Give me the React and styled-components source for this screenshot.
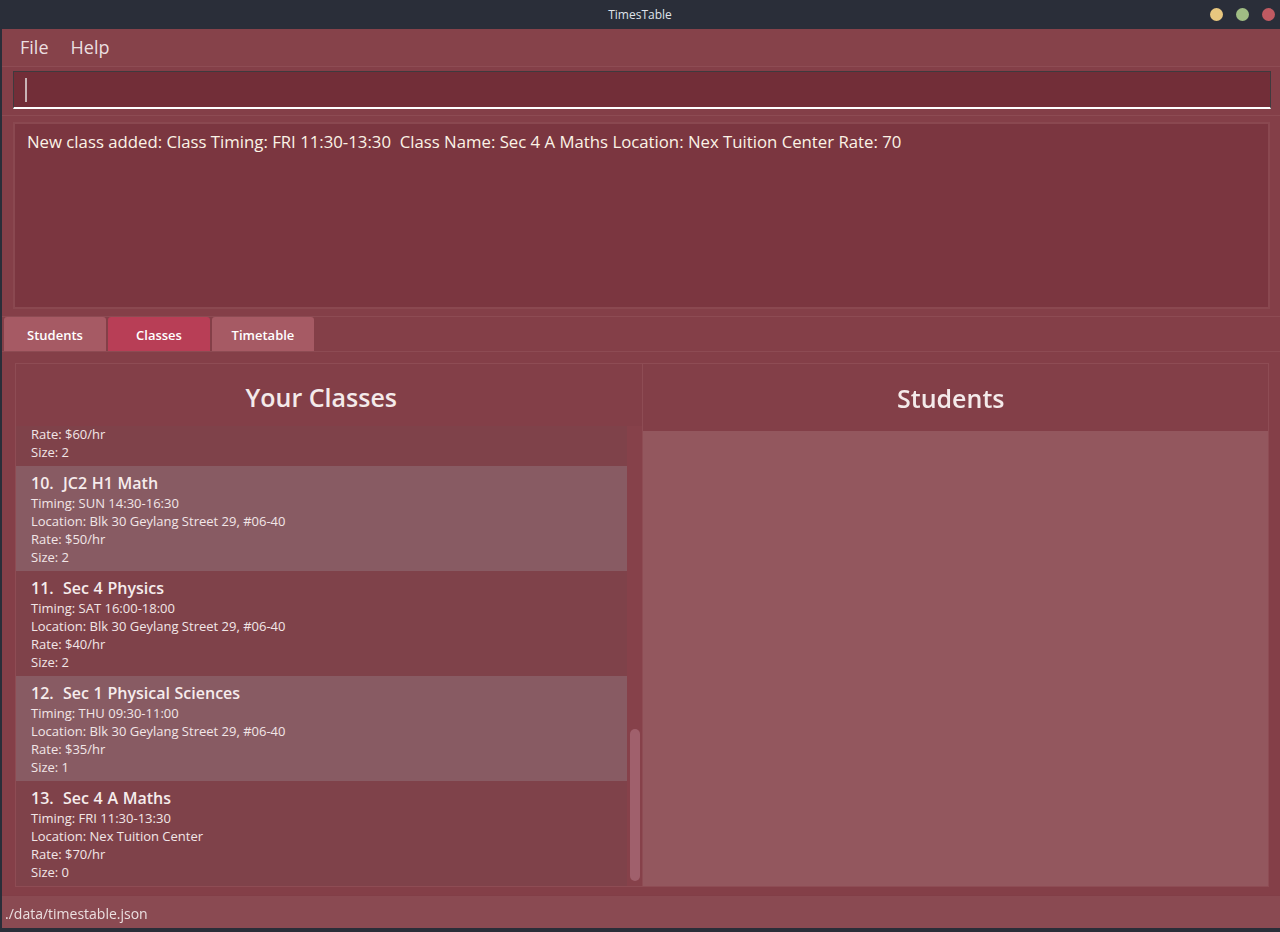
import { useLayoutEffect, useRef, useState } from "react";
import styled, { createGlobalStyle } from "styled-components";

const GlobalStyle = createGlobalStyle`
  html, body {
    margin: 0;
    padding: 0;
    background: #2a2e39;
  }
  body {
    font-family: "Open Sans", "Noto Sans", sans-serif;
  }
  * {
    box-sizing: border-box;
  }
`;

const classes = [
  { name: "Sec 3 E Maths", timing: "MON 10:00-12:00", location: "Blk 30 Geylang Street 29, #06-40", rate: 45, size: 3 },
  { name: "Sec 2 Science", timing: "MON 14:00-16:00", location: "Blk 30 Geylang Street 29, #06-40", rate: 40, size: 2 },
  { name: "JC1 H2 Chemistry", timing: "TUE 09:00-11:00", location: "Blk 30 Geylang Street 29, #06-40", rate: 55, size: 1 },
  { name: "Sec 4 Chemistry", timing: "TUE 15:00-17:00", location: "Blk 30 Geylang Street 29, #06-40", rate: 45, size: 2 },
  { name: "P6 Maths", timing: "WED 10:00-12:00", location: "Blk 30 Geylang Street 29, #06-40", rate: 35, size: 3 },
  { name: "Sec 1 Maths", timing: "WED 16:00-18:00", location: "Blk 30 Geylang Street 29, #06-40", rate: 35, size: 2 },
  { name: "JC2 H2 Physics", timing: "THU 14:00-16:00", location: "Blk 30 Geylang Street 29, #06-40", rate: 60, size: 1 },
  { name: "Sec 3 Physics", timing: "FRI 09:00-11:00", location: "Blk 30 Geylang Street 29, #06-40", rate: 40, size: 2 },
  { name: "JC2 H2 Math", timing: "SAT 10:00-12:00", location: "Blk 30 Geylang Street 29, #06-40", rate: 60, size: 2 },
  { name: "JC2 H1 Math", timing: "SUN 14:30-16:30", location: "Blk 30 Geylang Street 29, #06-40", rate: 50, size: 2 },
  { name: "Sec 4 Physics", timing: "SAT 16:00-18:00", location: "Blk 30 Geylang Street 29, #06-40", rate: 40, size: 2 },
  { name: "Sec 1 Physical Sciences", timing: "THU 09:30-11:00", location: "Blk 30 Geylang Street 29, #06-40", rate: 35, size: 1 },
  { name: "Sec 4 A Maths", timing: "FRI 11:30-13:30", location: "Nex Tuition Center", rate: 70, size: 0 },
];

const Screen = styled.div`
  height: 932px;
  display: flex;
  flex-direction: column;
  padding-bottom: 4px;
`;

const TitleBar = styled.div`
  height: 29px;
  flex-shrink: 0;
  display: flex;
  align-items: center;
  justify-content: center;
  position: relative;
  color: #dfe3ea;
  font-size: 12px;
`;

const WindowControls = styled.div`
  position: absolute;
  right: 5px;
  top: 8px;
  display: flex;
  gap: 13px;
`;

const Light = styled.span`
  width: 13px;
  height: 13px;
  border-radius: 50%;
  background: ${(p) => p.$color};
`;

const Window = styled.div`
  flex: 1;
  margin-left: 2px;
  display: flex;
  flex-direction: column;
  background: #843f48;
  min-height: 0;
`;

const MenuBar = styled.div`
  height: 38px;
  flex-shrink: 0;
  display: flex;
  align-items: center;
  gap: 22px;
  padding-left: 18px;
  padding-bottom: 2px;
  background: #86424a;
  border-bottom: 1px solid #8e4c54;
  color: #ebdfe0;
  font-size: 18px;
`;

const CommandPane = styled.div`
  flex-shrink: 0;
  padding: 4px 9px 6px 11px;
  border-bottom: 1px solid #8d4b53;
`;

const CommandBox = styled.div`
  height: 38px;
  background: #722e38;
  border: 1px solid #3f3a3e;
  border-bottom: 2px solid #ffffff;
  display: flex;
  align-items: center;
  padding-left: 11px;
`;

const Caret = styled.span`
  width: 2px;
  height: 24px;
  background: #c8b4b6;
`;

const ResultPane = styled.div`
  flex-shrink: 0;
  padding: 6px 10px 7px 11px;
  border-bottom: 1px solid #8d4b53;
`;

const ResultBox = styled.div`
  height: 187px;
  background: #7b3640;
  border: 2px solid #8a4850;
  padding: 7px 12px;
  color: #fbf3e6;
  font-size: 16.75px;
  line-height: 22px;
  white-space: pre;
`;

const TabBar = styled.div`
  height: 35px;
  flex-shrink: 0;
  display: flex;
  align-items: flex-end;
  gap: 2px;
  padding-left: 2px;
  border-bottom: 1px solid #8d4b53;
`;

const Tab = styled.div`
  width: 102px;
  height: 34px;
  display: flex;
  align-items: center;
  justify-content: center;
  padding-top: 2px;
  border-radius: 3px 3px 0 0;
  background: ${(p) => (p.$active ? "#b83e56" : "#a65a64")};
  color: #ffffff;
  font-size: 13px;
  font-weight: 600;
`;

const MainArea = styled.div`
  flex: 1;
  min-height: 0;
  padding: 11px 11px 8px 13px;
  border-bottom: 1px solid #823e47;
`;

const Panel = styled.div`
  height: 100%;
  display: grid;
  grid-template-columns: 1fr 1fr;
  gap: 1px;
  background: #8e4c54;
  border: 1px solid #8e4c54;
`;

const Column = styled.div`
  display: flex;
  flex-direction: column;
  min-height: 0;
  background: #833f48;
`;

const ColumnHeader = styled.div`
  height: ${(p) => p.$height}px;
  flex-shrink: 0;
  display: flex;
  align-items: center;
  justify-content: center;
  padding-right: ${(p) => p.$inset}px;
  padding-top: ${(p) => p.$top}px;
  color: #f4eaea;
  font-size: 25px;
  font-weight: 600;
`;

const ListArea = styled.div`
  flex: 1;
  min-height: 0;
  display: flex;
`;

const ClassList = styled.div`
  flex: 1;
  min-height: 0;
  overflow-y: auto;
  scrollbar-width: none;
`;

const ScrollTrack = styled.div`
  width: 15px;
  flex-shrink: 0;
  display: flex;
  flex-direction: column;
  padding: 3px 2px 5px 3px;
  background: #86414a;
`;

const ScrollThumb = styled.div`
  width: 10px;
  border-radius: 5px;
  background: #a0606c;
`;

const Card = styled.div`
  height: 105px;
  padding: 6px 15px 5px;
  background: ${(p) => (p.$alt ? "#885b63" : "#7f424a")};
  color: #f2e6e7;
`;

const CardTitle = styled.div`
  font-size: 16px;
  font-weight: 600;
  line-height: 22px;
  white-space: pre;
  word-spacing: 0.5px;
  color: #f6ecec;
`;

const CardLine = styled.div`
  font-size: 13px;
  line-height: 18px;
`;

const StudentsBody = styled.div`
  flex: 1;
  background: #93575e;
`;

const StatusBar = styled.div`
  height: 32px;
  flex-shrink: 0;
  display: flex;
  align-items: center;
  padding-left: 3px;
  padding-top: 2px;
  background: #8a4a52;
  color: #ebdfe0;
  font-size: 14px;
`;

const ClassCard = ({ index, item }) => (
  <Card $alt={index % 2 === 1}>
    <CardTitle>{`${index + 1}.  ${item.name}`}</CardTitle>
    <CardLine>Timing: {item.timing}</CardLine>
    <CardLine>Location: {item.location}</CardLine>
    <CardLine>Rate: ${item.rate}/hr</CardLine>
    <CardLine>Size: {item.size}</CardLine>
  </Card>
);

const App = () => {
  const listRef = useRef(null);
  const trackRef = useRef(null);
  const [thumb, setThumb] = useState({ top: 0, height: 0 });

  useLayoutEffect(() => {
    const el = listRef.current;
    const track = trackRef.current;
    if (!el || !track) return;
    el.scrollTop = el.scrollHeight;
    const space = track.clientHeight - 8;
    const height = Math.max(24, (space * el.clientHeight) / el.scrollHeight);
    const range = el.scrollHeight - el.clientHeight;
    const top = range > 0 ? ((space - height) * el.scrollTop) / range : 0;
    setThumb({ top, height });
  }, []);

  return (
    <>
      <GlobalStyle />
      <Screen>
        <TitleBar>
          TimesTable
          <WindowControls>
            <Light $color="#e8c77f" />
            <Light $color="#a0bd84" />
            <Light $color="#c05a62" />
          </WindowControls>
        </TitleBar>
        <Window>
          <MenuBar>
            <span>File</span>
            <span>Help</span>
          </MenuBar>
          <CommandPane>
            <CommandBox>
              <Caret />
            </CommandBox>
          </CommandPane>
          <ResultPane>
            <ResultBox>
              New class added: Class Timing: FRI 11:30-13:30  Class Name: Sec 4 A Maths Location: Nex Tuition Center Rate: 70
            </ResultBox>
          </ResultPane>
          <TabBar>
            <Tab>Students</Tab>
            <Tab $active>Classes</Tab>
            <Tab>Timetable</Tab>
          </TabBar>
          <MainArea>
            <Panel>
              <Column>
                <ColumnHeader $height={62} $inset={15} $top={4}>Your Classes</ColumnHeader>
                <ListArea>
                  <ClassList ref={listRef}>
                    {classes.map((item, i) => (
                      <ClassCard key={i} index={i} item={item} />
                    ))}
                  </ClassList>
                  <ScrollTrack ref={trackRef}>
                    <ScrollThumb style={{ marginTop: thumb.top, height: thumb.height }} />
                  </ScrollTrack>
                </ListArea>
              </Column>
              <Column>
                <ColumnHeader $height={67} $inset={9} $top={0}>Students</ColumnHeader>
                <StudentsBody />
              </Column>
            </Panel>
          </MainArea>
          <StatusBar>./data/timestable.json</StatusBar>
        </Window>
      </Screen>
    </>
  );
};

export default App;
